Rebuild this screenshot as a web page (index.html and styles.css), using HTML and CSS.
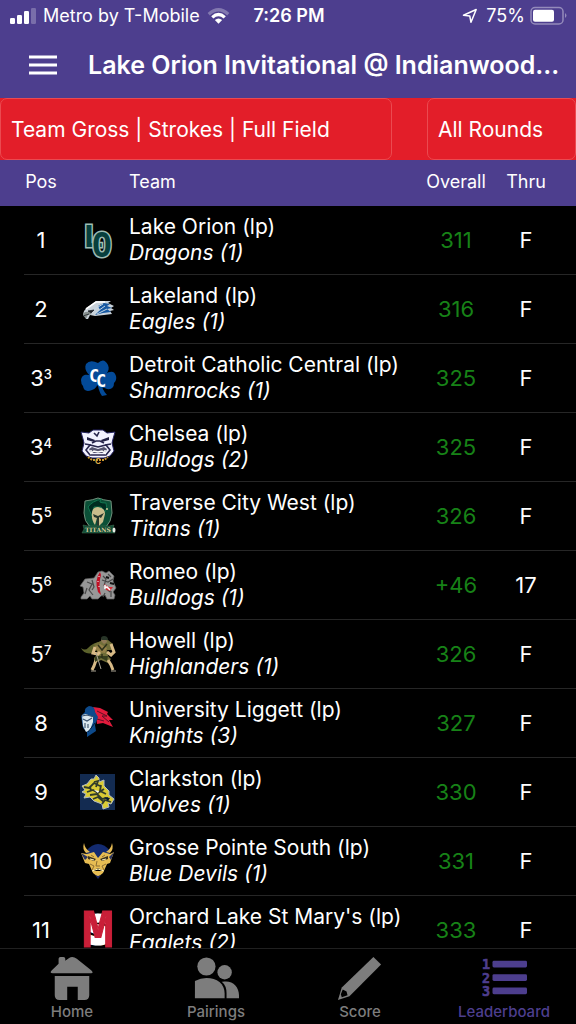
FILE: index.html
```html
<!DOCTYPE html>
<html lang="en">
<head>
<meta charset="utf-8">
<meta name="viewport" content="width=device-width, initial-scale=1">
<title>Leaderboard</title>
<link rel="stylesheet" href="styles.css">
</head>
<body>
<header class="top">
  <div class="status">
    <div class="status-side">
      <svg class="signal" viewBox="0 0 26 18" aria-hidden="true"><g fill="#fff"><rect x="0" y="11" width="5" height="6" rx="1.2"/><rect x="7" y="8" width="5" height="9" rx="1.2"/><rect x="14" y="4" width="5" height="13" rx="1.2"/><rect x="21" y="1" width="5" height="16" rx="1.2" opacity=".25"/></g></svg>
      <span>Metro by T-Mobile</span>
      <svg class="wifi" viewBox="0 0 24 18" aria-hidden="true"><g fill="none" stroke="#fff" stroke-width="3.4"><path d="M1.8 7.2Q12-2.2 22.2 7.2" opacity=".3"/><path d="M5.5 10.4Q12 4.6 18.500 10.400"/></g><path d="M8.200 13.200Q12 10 15.800 13.200L12 17z" fill="#fff"/></svg>
    </div>
    <span class="clock">7:26 PM</span>
    <div class="status-side status-right">
      <svg class="locate" viewBox="0 0 16 16" aria-hidden="true"><path d="M1.500 7.300 14.200 1.500 9 14.300 7.800 8.100Z" fill="none" stroke="#fff" stroke-width="1.500" stroke-linejoin="round"/></svg>
      <span>75%</span>
      <svg class="battery" viewBox="0 0 38 20" aria-hidden="true"><rect x="1" y="1.500" width="32" height="16.500" rx="4" fill="none" stroke="#fff" stroke-opacity=".4" stroke-width="1.500"/><rect x="3" y="3.700" width="21" height="12" rx="2" fill="#fff"/><path d="M35 7v5q3-2.500 0-5" fill="#fff" opacity=".4"/></svg>
    </div>
  </div>
  <div class="titlebar">
    <button class="menu" type="button" aria-label="Menu"><svg viewBox="0 0 28 20" aria-hidden="true"><path d="M0 2h28M0 10h28M0 18h28" stroke="#fff" stroke-width="2.800"/></svg></button>
    <h1>Lake Orion Invitational @ Indianwood...</h1>
  </div>
</header>
<div class="filters">
  <select class="filter filter-board" aria-label="Leaderboard view"><option>Team Gross | Strokes | Full Field</option></select>
  <select class="filter filter-round" aria-label="Round"><option>All Rounds</option></select>
</div>
<main class="board">
<table>
<thead>
<tr><th scope="col">Pos</th><th class="logo" aria-label="Logo"></th><th scope="col" class="team">Team</th><th scope="col">Overall</th><th scope="col">Thru</th></tr>
</thead>
<tbody>
<tr><td>1</td><td class="logo"><svg viewBox="0 0 36 36" role="img" aria-label="Lake Orion"><g fill="#073f3d" stroke="#9ebcb4" stroke-width="3" paint-order="stroke"><text x="3" y="25" font-size="34" class="typewriter">L</text><text x="12" y="35" font-size="33" class="block">O</text></g></svg></td><td class="team">Lake Orion (lp)<em>Dragons (1)</em></td><td class="score">311</td><td>F</td></tr>

<tr><td>2</td><td class="logo"><svg viewBox="0 0 36 36" role="img" aria-label="Lakeland"><path d="M3 25Q3 19 8 16L16 10 31 10 28 12 34 15 31 17 34 19 30 20 32 23 24 24 15 25 10 24 8 28 6 28 6 25Z" fill="#c9d2da"/><path d="M18 15 24 12 30 13 27 15 32 17 27 18 31 21 23 22 15 24 20 19Z" fill="#1758a1"/><path d="M13 19 23 13M15 22 25 15M17 23 27 18" stroke="#c4d7e6" stroke-width="1"/><path d="M3 24Q4 20 9 21L12 23 8 24 6 28Z" fill="#87908e"/><path d="M8 20 14 19 11 22ZM3 25 9 23" fill="#20252b" stroke="#20252b" stroke-width=".8"/><path d="M6 18 16 11 25 11" fill="none" stroke="#fff" stroke-width="1.600"/></svg></td><td class="team">Lakeland (lp)<em>Eagles (1)</em></td><td class="score">316</td><td>F</td></tr>

<tr><td>3<sup>3</sup></td><td class="logo"><svg viewBox="0 0 36 36" role="img" aria-label="Detroit Catholic Central"><g fill="#034a98"><path d="M18 22C10 16 3 11 6 4Q10-1 18 3 24-3 28 5C31 12 24 16 18 22Z"/><path d="M18 20C11 14 2 12 1 20Q1 24 3 26 4 33 12 30 18 28 18 20Z"/><path d="M18 20C26 12 34 8 36 16Q37 20 34 23 34 30 27 29 20 27 18 20Z"/><path d="M17 19Q18 31 22 36L27 35Q22 30 20 19Z"/></g><g class="block" fill="#fff" stroke="#034a98" stroke-width="1.500" paint-order="stroke"><text x="9" y="22" font-size="17">C</text><text x="16" y="27" font-size="17">C</text></g></svg></td><td class="team">Detroit Catholic Central (lp)<em>Shamrocks (1)</em></td><td class="score">325</td><td>F</td></tr>

<tr><td>3<sup>4</sup></td><td class="logo"><svg viewBox="0 0 36 36" role="img" aria-label="Chelsea"><path d="M1 3 9 4 13 1 23 1 27 4 35 3 33 10 32 14 34 22 30 27 24 29H12L6 27 2 22 4 14 3 10Z" fill="#f2f2ff" stroke="#242260" stroke-width="1"/><path d="M7 8 15 11 14 13 7 11ZM29 8 21 11 22 13 29 11Z" fill="#222044"/><path d="M14 4 17 7 19 3M11 16 5 15M25 16 31 15M12 14 16 12h4l4 2M6 21l4-5 8 2 8-2 4 5-4 5H10Z" fill="none" stroke="#28264d" stroke-width="1.600"/><path d="M9 20 12 18 18 20 24 18 27 20 25 24H11Z" fill="#55546f"/><path d="M11 21v3l3-2 4 1 4-1 3 2v-3" stroke="#fff" stroke-width="1.500" fill="none"/><path d="M8 28 12 31h12l4-3" fill="none" stroke="#c9982f" stroke-width="2" stroke-dasharray="2 1"/><text x="15" y="35" font-size="8" font-weight="700" fill="#d9a544">C</text></svg></td><td class="team">Chelsea (lp)<em>Bulldogs (2)</em></td><td class="score">325</td><td>F</td></tr>

<tr><td>5<sup>5</sup></td><td class="logo"><svg viewBox="0 0 36 36" role="img" aria-label="Traverse City West Titans"><path d="M5 3Q13 2 18 0 23 2 31 3L32 15Q31 24 26 29H10Q4 23 4 15Z" fill="#0b5037" stroke="#71917c" stroke-width="1"/><path d="M8 9Q12 3 22 1 16 5 26 5 28 10 25 14L21 9H14L12 18Z" fill="#002d21" stroke="#137650"/><path d="M12 14Q13 9 18 9 25 10 25 16L23 24 19 28 17 20 15 27Q11 22 12 14Z" fill="#c9bd8c"/><path d="M13 16 18 18 24 15 21 20 19 19 19 28 17 28 17 20 14 19Z" fill="#26372c"/><path d="M3 27 8 28H29L34 27 33 30 35 35H2L4 31Z" fill="#114e36" stroke="#467255" stroke-width=".5"/><text x="18" y="34" text-anchor="middle" class="slab" font-size="6" fill="#d8c99b">TITANS</text><ellipse cx="34" cy="32" rx="1.500" ry="2.500" fill="#e8eee6"/><circle cx="27" cy="11" r="1" fill="#c7c796"/></svg></td><td class="team">Traverse City West (lp)<em>Titans (1)</em></td><td class="score">326</td><td>F</td></tr>

<tr><td>5<sup>6</sup></td><td class="logo"><svg viewBox="0 0 36 36" role="img" aria-label="Romeo"><path d="M1 30 4 26 3 20 0 19 5 12 14 11 18 5 22 4 26 6 29 4 34 9 33 14 36 21 33 25 35 28 34 32H27L25 28 21 29 18 32H12L10 29 7 32H1Z" fill="#989898" stroke="#626262" stroke-width=".7"/><path d="M20 5Q14 13 18 25L21 28Q18 18 21 8Z" fill="#c20e23"/><path d="M7 15 12 17 9 23 13 28M12 13 14 20 12 23M23 9 26 12 24 19M28 7 31 10M25 26 23 30M7 21 5 27M22 13 28 15 33 12M31 24V30M26 21 30 25" fill="none" stroke="#4a4a4a" stroke-width="1.200"/><path d="M26 10 29 11M30 16 34 17" stroke="#111" stroke-width="2"/><path d="M24 17 29 20 33 20 30 24 26 23Z" fill="#d62d36"/><path d="M25 18v3l2-1 3 3" fill="none" stroke="#fff" stroke-width="1.500"/><path d="M19 9v1M18 14v1M19 19v1" stroke="#fff"/></svg></td><td class="team">Romeo (lp)<em>Bulldogs (1)</em></td><td class="score">+46</td><td>17</td></tr>

<tr><td>5<sup>7</sup></td><td class="logo"><svg viewBox="0 0 36 36" role="img" aria-label="Howell"><path d="M22 5Q12 7 8 12 5 15 1 12 4 19 13 17L18 13Z" fill="#5b612b"/><path d="M14 8 21 5 28 4 33 8 32 14 27 14 28 20 31 23 28 27 21 24 15 27 14 22 18 18Z" fill="#706e39"/><path d="M14 11 20 8 27 12 25 17 18 16Z" fill="#948149"/><path d="M22 1 26 1 27 6 24 8 21 5Z" fill="#8f7957"/><path d="M21 3Q21 0 24 0 28 0 28 4L22 4Z" fill="#283528"/><path d="M15 11 13 17 18 18 20 16M31 8 34 16 31 19 27 16M16 24 14 30 12 34M28 24 31 29 33 34" fill="none" stroke="#d8ba86" stroke-width="3"/><path d="M15 20 28 20 27 25 21 22 15 26Z" fill="#373f1e"/><path d="M16 17 21 33M11 35H16M31 35H36" stroke="#aaa494" stroke-width="1"/><path d="M18 9 22 14 27 8M22 18v4" fill="none" stroke="#2e311a" stroke-width="1.500"/></svg></td><td class="team">Howell (lp)<em>Highlanders (1)</em></td><td class="score">326</td><td>F</td></tr>

<tr><td>8</td><td class="logo"><svg viewBox="0 0 36 36" role="img" aria-label="University Liggett"><path d="M13 2 20 3 28 7 27 9 33 15 29 15 33 22 23 18 17 19 16 11Z" fill="#e11b3c"/><path d="M17 6 27 11 22 11 29 17M17 14 24 16" stroke="#5d1025" fill="none"/><path d="M5 7Q4 3 9 1 15 1 15 7L18 12 15 20 16 26 7 32 7 27 3 23 1 11Z" fill="#0d4a8b"/><path d="M2 10 6 9 13 12 13 17 10 25 6 27 3 21Z" fill="#dbe8ee"/><path d="M3 14 7 16 12 13M5 18v5M8 19v4M2 11 7 10 14 12" fill="none" stroke="#39506b" stroke-width="1.100"/><path d="M8 27 15 18" stroke="#051e3b"/></svg></td><td class="team">University Liggett (lp)<em>Knights (3)</em></td><td class="score">327</td><td>F</td></tr>

<tr><td>9</td><td class="logo"><svg viewBox="0 0 36 36" role="img" aria-label="Clarkston"><path d="M0 0h35v36H0z" fill="#132b51"/><path d="M2 12 7 10 11 5 14 5 16 1 19 4 19 8 24 6 24 12 29 17 29 21 34 25 31 30 28 29 29 33 23 35 22 30 14 27 10 23 4 24 6 20 2 18 5 16Z" fill="#dacb35" stroke="#b2bac1" stroke-width="1"/><path d="M4 13 9 14 14 9 20 12M7 18 13 16 18 19 24 15M10 21 17 20 22 25 28 24M22 30 25 26 31 28M14 8 18 7 16 13M10 12 11 17M21 11 20 17 26 20M13 25 18 23 24 28" fill="none" stroke="#303b2a" stroke-width="1.800"/><path d="M14 16 19 17 18 19Z" fill="#fff"/><path d="M24 23 30 24 28 27Z" fill="#071a33"/></svg></td><td class="team">Clarkston (lp)<em>Wolves (1)</em></td><td class="score">330</td><td>F</td></tr>

<tr><td>10</td><td class="logo"><svg viewBox="0 0 36 36" role="img" aria-label="Grosse Pointe South"><path d="M6 8Q12 1 18 1 25 1 30 8L29 18H7Z" fill="#132b71"/><path d="M4 0Q2 6 6 10L10 9Q5 6 4 0M32 0Q34 6 30 10L26 9Q31 6 32 0" fill="#e6bb54"/><path d="M7 11 14 9 18 15 23 9 30 11 34 9 30 20 27 21 23 30 18 34 13 30 9 21 5 20 1 10Z" fill="#e7bd52"/><path d="M1 10 8 14 5 17ZM34 9 29 14 31 17Z" fill="#283261"/><path d="M8 13 16 16 14 18 8 16ZM28 13 20 16 22 18 28 16ZM14 27 18 25 22 27 18 28Z" fill="#3b321f"/><path d="M10 16 14 17M22 17 26 16M12 28 18 26 24 28" stroke="#fff3b5" stroke-width="1"/><path d="M17 18 16 23h4M10 21 14 23 12 27M26 21 22 23 24 27M11 12l3 2M25 12l-3 2" fill="none" stroke="#8d6e33" stroke-width="1"/><path d="M15 32 18 33 21 32 18 36Z" fill="#192863"/></svg></td><td class="team">Grosse Pointe South (lp)<em>Blue Devils (1)</em></td><td class="score">331</td><td>F</td></tr>

<tr><td>11</td><td class="logo"><svg viewBox="0 0 36 36" role="img" aria-label="Orchard Lake St Mary's"><g text-anchor="middle"><text x="18" y="31" font-size="37" class="wide" fill="#fff" stroke="#fff" stroke-width="4">S</text><text x="18" y="35" font-size="54" class="typewriter" fill="#c91f38" stroke="#c91f38" stroke-width="1">M</text></g></svg></td><td class="team">Orchard Lake St Mary's (lp)<em>Eaglets (2)</em></td><td class="score">333</td><td>F</td></tr>
</tbody>
</table>
</main>
<nav class="tabs" aria-label="Main">
  <a href="#home"><svg viewBox="0 0 48 48" aria-hidden="true"><g fill="currentColor"><path d="M10 9V4q0-2 2-2h3q2 0 2 2v2l4-3q4-2 8 1L44 16q3 3 0 3H4q-4 0-1-3Z"/><path d="M6 22h36v20q0 5-5 5h-7V33H19v14h-8q-5 0-5-5Z"/></g></svg><span>Home</span></a>
  <a href="#pairings"><svg viewBox="0 0 48 48" aria-hidden="true"><g fill="currentColor"><circle cx="14" cy="12" r="9.500"/><circle cx="33" cy="18" r="7.500"/><path d="M2 45V27q6-3 12-3c11 0 19 6 19 16v5Z"/><path d="M31 28c10-2 17 5 17 14v3H35v-5q0-8-5-12Z"/></g></svg><span>Pairings</span></a>
  <a href="#score"><svg viewBox="0 0 48 48" aria-hidden="true"><path d="M38 2 46 10 13 43 1 47 5 34Z" fill="currentColor"/><path d="M6 36 10 38 11 42 5 44 4 41Z" fill="#000"/></svg><span>Score</span></a>
  <a href="#leaderboard" class="active" aria-current="page"><svg viewBox="0 0 48 48" aria-hidden="true"><g fill="currentColor"><rect x="12" y="6" width="36" height="7" rx="1.500"/><rect x="12" y="20" width="36" height="7" rx="1.500"/><rect x="12" y="34" width="36" height="7" rx="1.500"/></g><g class="block" fill="currentColor" stroke="currentColor" stroke-width=".6" font-size="14"><text x="1" y="15">1</text><text x="1" y="29">2</text><text x="1" y="43">3</text></g></svg><span>Leaderboard</span></a>
</nav>
</body>
</html>
```
FILE: styles.css
```css
* { box-sizing: border-box; }

body {
  margin: 0;
  height: 100vh;
  display: flex;
  flex-direction: column;
  background: #000;
  color: #fff;
  font-family: Inter, "Liberation Sans", sans-serif;
}

svg { display: block; flex: none; }

.top { background: #4d3e8e; }

.status {
  display: grid;
  grid-template-columns: 1fr auto 1fr;
  align-items: center;
  height: 32px;
  padding: 0 8px 0 10px;
  font-size: 18px;
  line-height: 24px;
}
.status-side { display: flex; align-items: center; gap: 7px; white-space: nowrap; }
.status-right { justify-content: flex-end; gap: 5px; }
.clock { font-weight: 600; }
.signal { width: 26px; height: 18px; }
.wifi { width: 23px; height: 18px; }
.locate { width: 16px; height: 16px; margin-right: 3px; }
.battery { width: 38px; height: 20px; }

.titlebar {
  display: flex;
  align-items: center;
  gap: 31px;
  height: 66px;
  padding: 0 16px 0 29px;
}
.menu { padding: 0; border: 0; background: none; }
.menu svg { width: 28px; height: 20px; }
h1 {
  flex: 1;
  margin: 0;
  font-size: 25px;
  line-height: 32px;
  font-weight: 600;
  white-space: nowrap;
}

.filters {
  display: flex;
  justify-content: space-between;
  gap: 35px;
  background: #e31e29;
}
.filter {
  appearance: none;
  height: 62px;
  padding: 2px 10px 0;
  border: 1px solid #eb4a50;
  border-radius: 7px;
  background: #e31e29;
  color: #fff;
  font: 21px/28px Inter, "Liberation Sans", sans-serif;
}
.filter-board { flex: 1; min-width: 0; }
.filter-round { width: 149px; }

.board { flex: 1; min-height: 0; overflow: hidden; }
table, thead, tbody { display: block; }
tr {
  display: grid;
  grid-template-columns: 34px 71px 1fr 80px 60px;
  align-items: center;
  padding-right: 20px;
}
thead { background: #4d3e8e; }
thead tr { height: 46px; padding-left: 24px; }
tbody tr { margin-left: 24px; padding-top: 8px; padding-bottom: 8px; border-bottom: 1px solid #262626; }
th, td { padding: 0; text-align: center; white-space: nowrap; }
th { font-size: 18px; line-height: 24px; font-weight: 400; padding-bottom: 2px; }
td { font-size: 22px; line-height: 26px; }
th.team, td.team { text-align: left; }
td.team { font-size: 21px; }
.logo { padding-left: 22px; }
.logo svg { width: 36px; height: 36px; overflow: visible; }
.team em { display: block; }
.score { color: #178217; }
sup { font-size: 13px; font-weight: 500; line-height: 0; vertical-align: 7px; }

.slab { font-family: "DejaVu Serif", serif; font-weight: 700; }
.block { font-family: "DejaVu Sans Mono", monospace; font-weight: 700; }
.wide { font-family: "DejaVu Sans", sans-serif; font-weight: 700; }
.typewriter { font-family: "Liberation Mono", monospace; font-weight: 700; }

.tabs {
  display: grid;
  grid-template-columns: repeat(4, 1fr);
  height: 76px;
  border-top: 1px solid #202020;
}
.tabs a {
  display: flex;
  flex-direction: column;
  align-items: center;
  padding-top: 5px;
  color: #7d7d7d;
  font-size: 15px;
  line-height: 20px;
  font-weight: 500;
  text-decoration: none;
}
.tabs svg { width: 46px; height: 48px; }
.tabs .active { color: #4d3e8e; }
```
